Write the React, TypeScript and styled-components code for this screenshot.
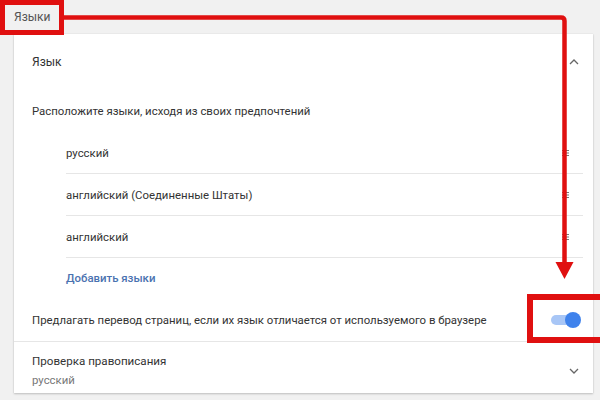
import { createGlobalStyle, styled } from "styled-components";

const GlobalStyle = createGlobalStyle`
  body {
    margin: 0;
    background: #f1f1f1;
    font-family: Roboto, "Liberation Sans", sans-serif;
    color: #333;
  }
`;

const languages = ["русский", "английский (Соединенные Штаты)", "английский"];

function Chevron({ up }: { up?: boolean }) {
  return (
    <svg width="10" height="6" viewBox="0 0 10 6">
      <path
        d={up ? "M1 5 L5 1 L9 5" : "M1 1 L5 5 L9 1"}
        fill="none"
        stroke="#666"
        strokeWidth="1.3"
      />
    </svg>
  );
}

function Handle() {
  return (
    <svg width="7" height="8" viewBox="0 0 7 8">
      <path d="M0 1.5 H7 M0 4 H7 M0 6.5 H7" stroke="#777" strokeWidth="1" />
    </svg>
  );
}

export default function App() {
  return (
    <Page>
      <GlobalStyle />
      <TopBar>Языки</TopBar>
      <Card>
        <SectionRow>
          <span>Язык</span>
          <Chevron up />
        </SectionRow>
        <TextRow>Расположите языки, исходя из своих предпочтений</TextRow>
        <LangList>
          {languages.map((lang) => (
            <LangRow key={lang}>
              <span>{lang}</span>
              <Handle />
            </LangRow>
          ))}
          <AddLink>Добавить языки</AddLink>
        </LangList>
        <ToggleRow>
          <span>
            Предлагать перевод страниц, если их язык отличается от используемого в браузере
          </span>
          <Toggle>
            <Knob />
          </Toggle>
        </ToggleRow>
        <SpellRow>
          <div>
            <div>Проверка правописания</div>
            <SubText>русский</SubText>
          </div>
          <Chevron />
        </SpellRow>
      </Card>
      <Annotation width="600" height="400" viewBox="0 0 600 400">
        <rect x="2.5" y="2.5" width="59" height="30" fill="none" stroke="#e01010" strokeWidth="5" />
        <path
          d="M62 17.5 H561 Q564.5 17.5 564.5 21 V264"
          fill="none"
          stroke="#e01010"
          strokeWidth="4.5"
        />
        <polygon points="555.5,262 573.5,262 564.5,279" fill="#e01010" />
        <rect x="530" y="297" width="80" height="43" fill="none" stroke="#e01010" strokeWidth="6" />
      </Annotation>
    </Page>
  );
}

const Page = styled.div`
  position: relative;
  width: 600px;
  height: 400px;
  overflow: hidden;
`;

const TopBar = styled.div`
  height: 34px;
  display: flex;
  align-items: center;
  padding-left: 14px;
  font-size: 12px;
  color: #555;
`;

const Card = styled.div`
  margin: 0 7px 0 14px;
  background: #fff;
  box-shadow: 0 1px 2px rgba(0, 0, 0, 0.2), 0 0 1px rgba(0, 0, 0, 0.12);
  font-size: 11.4px;
`;

const SectionRow = styled.div`
  height: 56px;
  display: flex;
  align-items: center;
  justify-content: space-between;
  padding: 0 14px 0 18px;
  font-size: 12px;
`;

const TextRow = styled.div`
  height: 42px;
  display: flex;
  align-items: center;
  padding-left: 18px;
`;

const LangList = styled.div`
  margin: 0 10px 0 52px;
`;

const LangRow = styled.div`
  height: 42px;
  display: flex;
  align-items: center;
  justify-content: space-between;
  padding-right: 14px;
  border-bottom: 1px solid #e6e6e6;
  box-sizing: border-box;
`;

const AddLink = styled.div`
  height: 40px;
  display: flex;
  align-items: center;
  font-weight: 500;
  color: #4a72b0;
`;

const ToggleRow = styled.div`
  height: 43px;
  display: flex;
  align-items: center;
  justify-content: space-between;
  padding: 0 10px 0 18px;
  border-bottom: 1px solid #e6e6e6;
`;

const Toggle = styled.div`
  position: relative;
  width: 26px;
  height: 10px;
  border-radius: 5px;
  background: #a8c6f6;
  margin-right: 6px;
`;

const Knob = styled.div`
  position: absolute;
  right: -4px;
  top: -3px;
  width: 16px;
  height: 16px;
  border-radius: 50%;
  background: #3f82ec;
`;

const SpellRow = styled.div`
  box-sizing: border-box;
  height: 51px;
  padding: 6px 14px 0 18px;
  display: flex;
  align-items: center;
  justify-content: space-between;
  line-height: 19px;
  font-size: 11.6px;
`;

const SubText = styled.div`
  color: #777;
  font-size: 11.4px;
`;

const Annotation = styled.svg`
  position: absolute;
  left: 0;
  top: 0;
  pointer-events: none;
`;
